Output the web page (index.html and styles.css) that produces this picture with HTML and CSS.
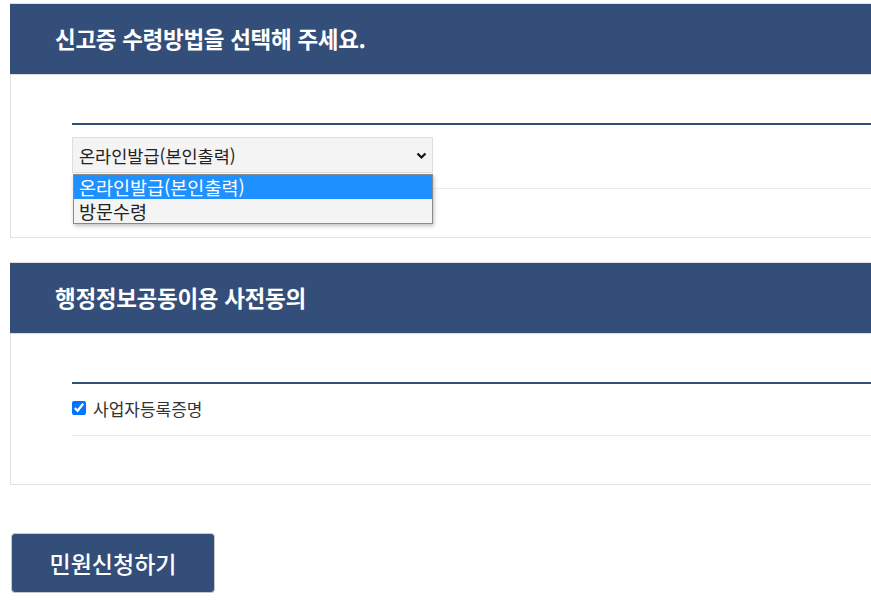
FILE: index.html
```html
<!DOCTYPE html>
<html lang="ko">
<head>
    <meta charset="UTF-8">
    <meta name="viewport" content="width=device-width, initial-scale=1.0">
    <title>민원신청</title>
    <link rel="stylesheet" href="styles.css">
</head>
<body>
    <div class="wrap">
        <section class="card">
            <h2 class="card-title">신고증 수령방법을 선택해 주세요.</h2>
            <div class="card-body">
                <div class="row">
                    <div class="select-box">
                        <select class="select">
                            <option>온라인발급(본인출력)</option>
                            <option>방문수령</option>
                        </select>
                        <svg class="chevron" width="11" height="8" viewBox="0 0 11 8"><path d="M1.5 1.5 L5.5 5.5 L9.5 1.5" fill="none" stroke="#111" stroke-width="2.2"/></svg>
                        <ul class="options">
                            <li class="option selected">온라인발급(본인출력)</li>
                            <li class="option">방문수령</li>
                        </ul>
                    </div>
                </div>
            </div>
        </section>

        <section class="card">
            <h2 class="card-title">행정정보공동이용 사전동의</h2>
            <div class="card-body">
                <div class="row">
                    <label class="check"><input type="checkbox" checked> 사업자등록증명</label>
                </div>
            </div>
        </section>

        <button class="submit" type="button">민원신청하기</button>
    </div>
</body>
</html>
```

FILE: styles.css
```css
html, body { overflow: hidden;}
body { margin: 0; font-family: "Noto Sans CJK KR", "Liberation Sans", sans-serif; color: #222; background: #fff;}
.wrap { padding: 3px 0 0 10px; width: 1100px;}
.card { border: 1px solid #e1e1e1; margin-bottom: 24px;}
.card-title { margin: 0 0 0 -1px; height: 70px; line-height: 68px; padding-left: 45px; background: #344e7a; color: #fff; font-size: 22.5px; font-weight: 700; letter-spacing: -0.3px; border-bottom: 1px solid #dcdcdc;}
.card-body { padding: 48px 0 48px 61px;}
.row { border-top: 2px solid #344e7a; border-bottom: 1px solid #ebebeb; padding: 12px 0 15px 0;}
.select-box { position: relative; width: 361px;}
.select { appearance: none; -webkit-appearance: none; display: block; width: 361px; height: 36px; padding: 0 6px; background: #f4f4f4; border: 1px solid #dedede; border-radius: 0; font-family: inherit; font-size: 17.5px; color: #222; outline: none;}
.chevron { position: absolute; right: 6px; top: 15px;}
.options { position: absolute; top: 37px; left: 1px; width: 358px; margin: 0; padding: 0; list-style: none; background: #f4f4f4; border: 1px solid #8a8a8a; box-shadow: 1px 2px 4px rgba(0,0,0,0.25); z-index: 2;}
.option { height: 24px; line-height: 24px; padding-left: 5px; font-size: 18.5px; color: #222;}
.option.selected { background: #1e90ff; color: #fff;}
.check { display: flex; align-items: center; height: 24px; font-size: 17px; color: #333;}
.check input { width: 14px; height: 14px; margin: 0 7px 0 0;}
.submit { margin-top: 24px; margin-left: 1px; width: 204px; height: 60px; background: #344e7a; color: #fff; border: 1px solid #c8c8c8; border-radius: 4px; font-family: inherit; font-size: 23px; font-weight: 500; cursor: pointer;}
```
